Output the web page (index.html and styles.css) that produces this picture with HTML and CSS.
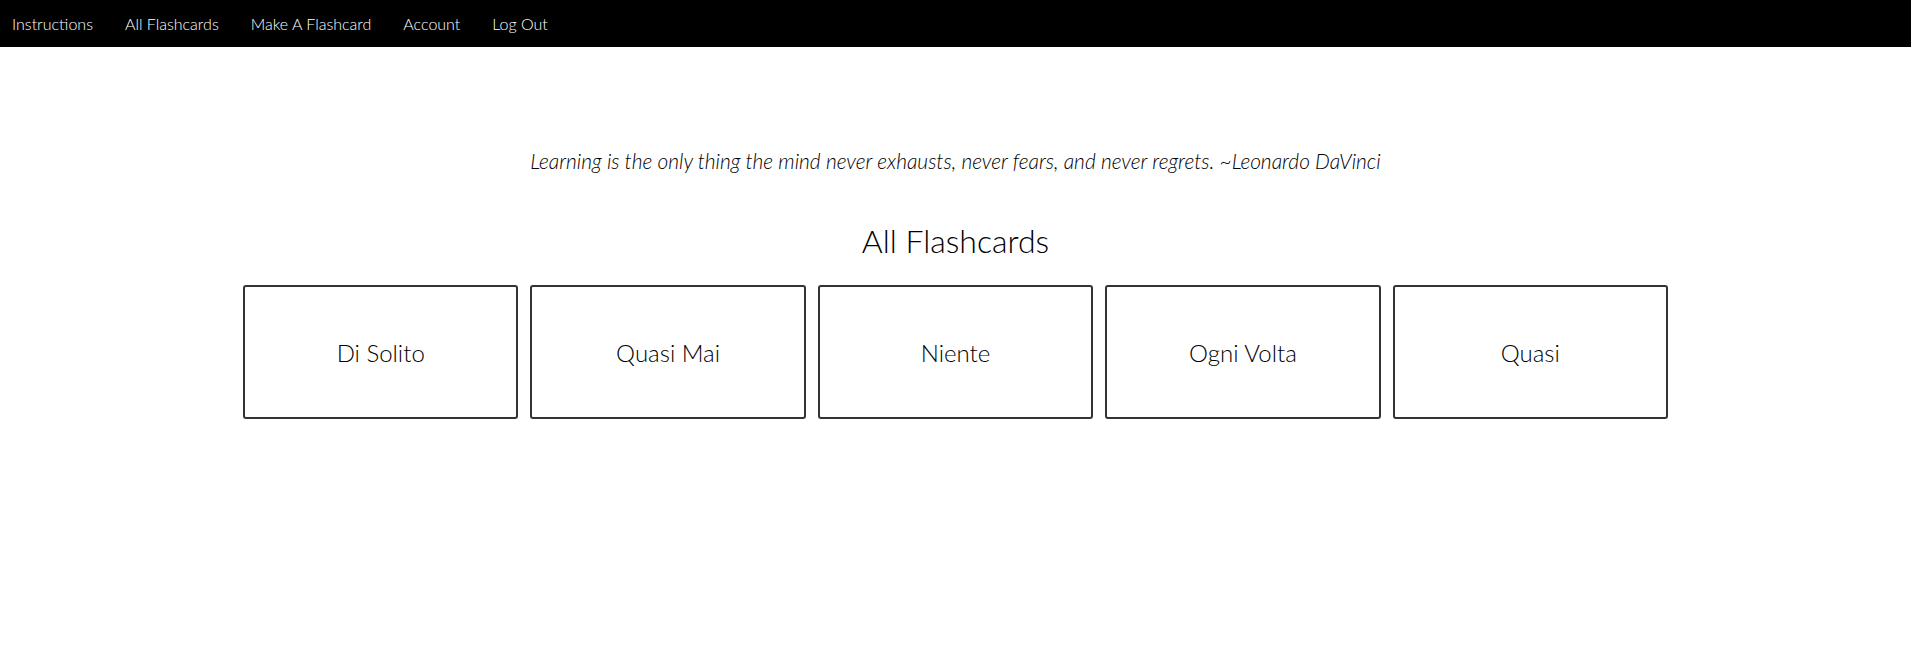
FILE: index.html
```html
<!DOCTYPE html>
<html lang="en">
<head>
<meta charset="utf-8">
<title>All Flashcards</title>
<link rel="stylesheet" href="styles.css">
</head>
<body>
<nav class="navbar">
  <a class="nav-link" href="#">Instructions</a>
  <a class="nav-link" href="#">All Flashcards</a>
  <a class="nav-link" href="#">Make A Flashcard</a>
  <a class="nav-link" href="#">Account</a>
  <a class="nav-link" href="#">Log Out</a>
</nav>
<main class="content">
  <p class="quote">Learning is the only thing the mind never exhausts, never fears, and never regrets. ~Leonardo DaVinci</p>
  <h1 class="title">All Flashcards</h1>
  <div class="cards">
    <div class="card">Di Solito</div>
    <div class="card">Quasi Mai</div>
    <div class="card">Niente</div>
    <div class="card">Ogni Volta</div>
    <div class="card">Quasi</div>
  </div>
</main>
</body>
</html>
```
FILE: styles.css
```css
html, body {
  margin: 0;
  padding: 0;
  background: #fff;
}
body {
  font-family: Lato, "Open Sans", "Liberation Sans", sans-serif;
  font-weight: 300;
  color: #000;
}
.navbar {
  height: 47px;
  background: #000;
  display: flex;
  align-items: center;
  gap: 32px;
  padding-left: 12px;
}
.nav-link {
  color: #fff;
  text-decoration: none;
  font-size: 16px;
  font-weight: 300;
  line-height: 20px;
  padding-top: 1px;
}
.content {
  display: flex;
  flex-direction: column;
  align-items: center;
  padding-top: 101px;
}
.quote {
  margin: 0;
  font-style: italic;
  font-size: 20.9px;
  line-height: 25px;
}
.title {
  margin: 48px 0 0;
  font-size: 32px;
  font-weight: 300;
  line-height: 40px;
}
.cards {
  margin-top: 24px;
  width: 1425px;
  display: flex;
  gap: 12px;
}
.card {
  flex: 1;
  height: 134px;
  box-sizing: border-box;
  border: 2px solid #333;
  border-radius: 3px;
  display: flex;
  align-items: center;
  justify-content: center;
  font-size: 24px;
  font-weight: 300;
}
```
